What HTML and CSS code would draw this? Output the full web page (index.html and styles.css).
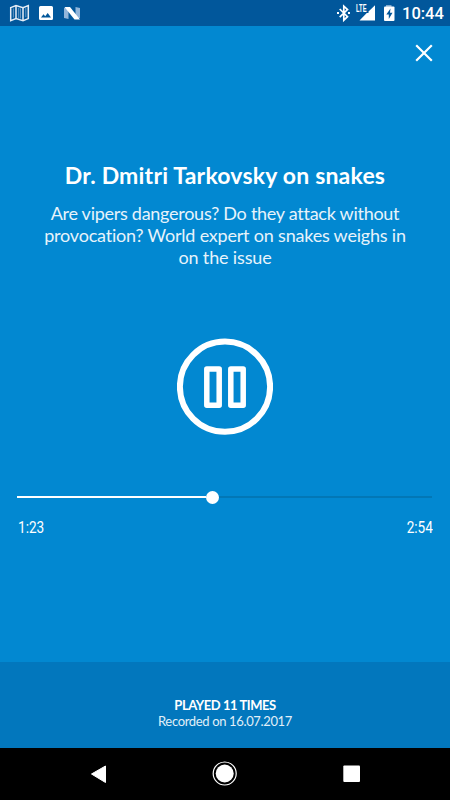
FILE: index.html
```html
<!DOCTYPE html>
<html lang="en">
<head>
    <meta charset="UTF-8">
    <title>Player</title>
    <link rel="stylesheet" href="styles.css">
</head>
<body>
    <div class="screen">
        <header class="status-bar">
            <svg class="status-left" width="90" height="26" viewBox="0 0 90 26">
                <path d="M10.7 7.6l5.3-2 7 2 5.3-2v13l-5.3 2-7-2-5.3 2z" fill="none" stroke="#e6edf6" stroke-width="1.5"/>
                <path d="M16 6v13M23 7v13" stroke="#e6edf6" stroke-width="1.5"/>
                <path d="M13.4 8.5v9M18.7 8v10M20.5 8.5v10M25.8 8v9" stroke="#7fa5cc" stroke-width=".8"/>
                <path fill="#fff" fill-rule="evenodd" d="M40.5 6h11a1.5 1.5 0 0 1 1.5 1.5v11a1.5 1.5 0 0 1-1.500 1.5h-11a1.5 1.5 0 0 1-1.5-1.5v-11a1.5 1.5 0 0 1 1.5-1.5zM41 17.500h10l-3.300-4.400-2.500 3.200-1.700-2z"/>
                <path d="M64 8l4.500-1v12l-4.500-1zM75.500 7l4.500 1v10l-4.500 1z" fill="#91b5da"/>
                <path d="M64.500 7h5.500l10 12.500h-5.500z" fill="#fff"/>
            </svg>
            <div class="status-right">
                <svg width="70" height="26" viewBox="0 0 70 26">
                    <path d="M4.700 9l7.800 7.700-3.700 3.500V6.200l3.700 3.300-7.800 7.700" fill="none" stroke="#fff" stroke-width="1.700"/>
                    <path d="M2 12h2v2H2zM13 12h2v2h-2z" fill="#fff"/>
                    <text class="lte" x="21" y="12" textLength="10.500" lengthAdjust="spacingAndGlyphs">LTE</text>
                    <path d="M40 5.200V20.500H24.500l7.300-7.500h1.700V11.500z" fill="#fff"/>
                    <path d="M51 5h5.500v2H51z" fill="#80a9cd"/>
                    <path d="M50 6.500h8.500a1 1 0 0 1 1 1V20a1 1 0 0 1-1 1H50a1 1 0 0 1-1-1V7.500a1 1 0 0 1 1-1z" fill="#fff"/>
                    <path d="M55.500 8.500l-4.200 6h2.500V19l3.700-6.200h-2.500z" fill="#01579b"/>
                </svg>
                <span class="clock">10:44</span>
            </div>
        </header>

        <main class="player">
            <button class="close" aria-label="Close">
                <svg width="18" height="18" viewBox="0 0 18 18">
                    <path d="M1.200 1.200l15.600 15.600M16.800 1.200L1.200 16.800" stroke="#fff" stroke-width="2.200"/>
                </svg>
            </button>
            <h1 class="title">Dr. Dmitri Tarkovsky on snakes</h1>
            <p class="description">
                <span class="line-one">Are vipers dangerous? Do they attack without</span><br>
                <span class="line-two">provocation? World expert on snakes weighs in</span><br>
                <span class="line-three">on the issue</span>
            </p>
            <button class="pause" aria-label="Pause">
                <svg width="96" height="98" viewBox="0 0 96 98">
                    <circle cx="48" cy="48.700" r="45.100" fill="none" stroke="#fff" stroke-width="6"/>
                    <path d="M29.800 31h12.400v36.200H29.800zM53.800 31h12.400v36.200H53.800z" fill="none" stroke="#fff" stroke-width="5.500" stroke-linejoin="round"/>
                </svg>
            </button>
            <div class="seekbar">
                <div class="progress"></div>
                <div class="thumb"></div>
                <div class="remaining"></div>
            </div>
            <div class="times">
                <span class="elapsed">1:23</span>
                <span class="total">2:54</span>
            </div>
        </main>

        <footer class="info">
            <div class="played">PLAYED 11 TIMES</div>
            <div class="recorded">Recorded on 16.07.2017</div>
        </footer>

        <nav class="nav-bar">
            <svg width="450" height="52" viewBox="0 0 450 52">
                <path d="M91.500 26L105.500 18v16.500z" fill="#fff" stroke="#fff" stroke-linejoin="round"/>
                <circle cx="224.700" cy="25.500" r="11.500" fill="none" stroke="#fff" stroke-width="1.200"/>
                <circle cx="224.700" cy="25.500" r="9" fill="#fff"/>
                <rect x="343.300" y="17.500" width="16.700" height="16.500" rx="1" fill="#fff"/>
            </svg>
        </nav>
    </div>
</body>
</html>
```
FILE: styles.css
```css
body {
    margin: 0;
    background-color: #000;
    color: white;
    font-family: Lato, sans-serif;
}

.screen {
    width: 450px;
    height: 800px;
    display: flex;
    flex-direction: column;
    overflow: hidden;
}

svg {
    display: block;
}

button {
    padding: 0;
    border: none;
    background: none;
    cursor: pointer;
}

.status-bar {
    height: 26px;
    display: flex;
    justify-content: space-between;
    background-color: #01579b;
}

.status-right {
    display: flex;
    width: 115px;
}

.lte {
    fill: white;
    font: bold 10px "Liberation Sans", sans-serif;
}

.clock {
    margin-left: -3px;
    font: 500 16.5px/28px Roboto, sans-serif;
}

.player {
    height: 636px;
    display: flex;
    flex-direction: column;
    background-color: #0288d1;
}

.close {
    margin: 18px 17px 0 0;
    align-self: flex-end;
}

.title {
    margin: 98px 0 0;
    height: 30px;
    font-size: 23px;
    line-height: 30px;
    font-weight: bold;
    letter-spacing: 0.2px;
    text-align: center;
    white-space: nowrap;
}

.description {
    margin: 12px 0 0;
    height: 66px;
    font-size: 18px;
    line-height: 22px;
    text-align: center;
    white-space: nowrap;
    font-variant-ligatures: none;
    color: #e7f3fb;
}

.line-one {
    letter-spacing: -0.27px;
}

.line-two {
    letter-spacing: -0.2px;
}

.line-three {
    letter-spacing: -0.15px;
}

.pause {
    margin: 70px auto 0;
}

.seekbar {
    margin: 54px 18px 0 17px;
    height: 14px;
    display: flex;
    align-items: center;
}

.progress {
    width: 189px;
    height: 2px;
    background-color: white;
}

.thumb {
    width: 13px;
    height: 13px;
    border-radius: 50%;
    background-color: white;
}

.remaining {
    flex: 1;
    height: 2px;
    background-color: #0277b6;
}

.times {
    margin: 14px 17px 0 17.5px;
    display: flex;
    justify-content: space-between;
    font: 16px/20px Roboto, sans-serif;
}

.elapsed {
    transform: scaleX(0.85);
    transform-origin: left;
}

.total {
    transform: scaleX(0.85);
    transform-origin: right;
}

.info {
    height: 86px;
    box-sizing: border-box;
    padding-top: 35px;
    background-color: #0277bd;
    text-align: center;
    line-height: 16px;
    white-space: nowrap;
}

.played {
    font-size: 13px;
    font-weight: bold;
    letter-spacing: -0.45px;
}

.recorded {
    font-size: 13px;
    letter-spacing: -0.35px;
    color: #e1eff8;
}

.nav-bar {
    height: 52px;
    background-color: #000;
}
```
